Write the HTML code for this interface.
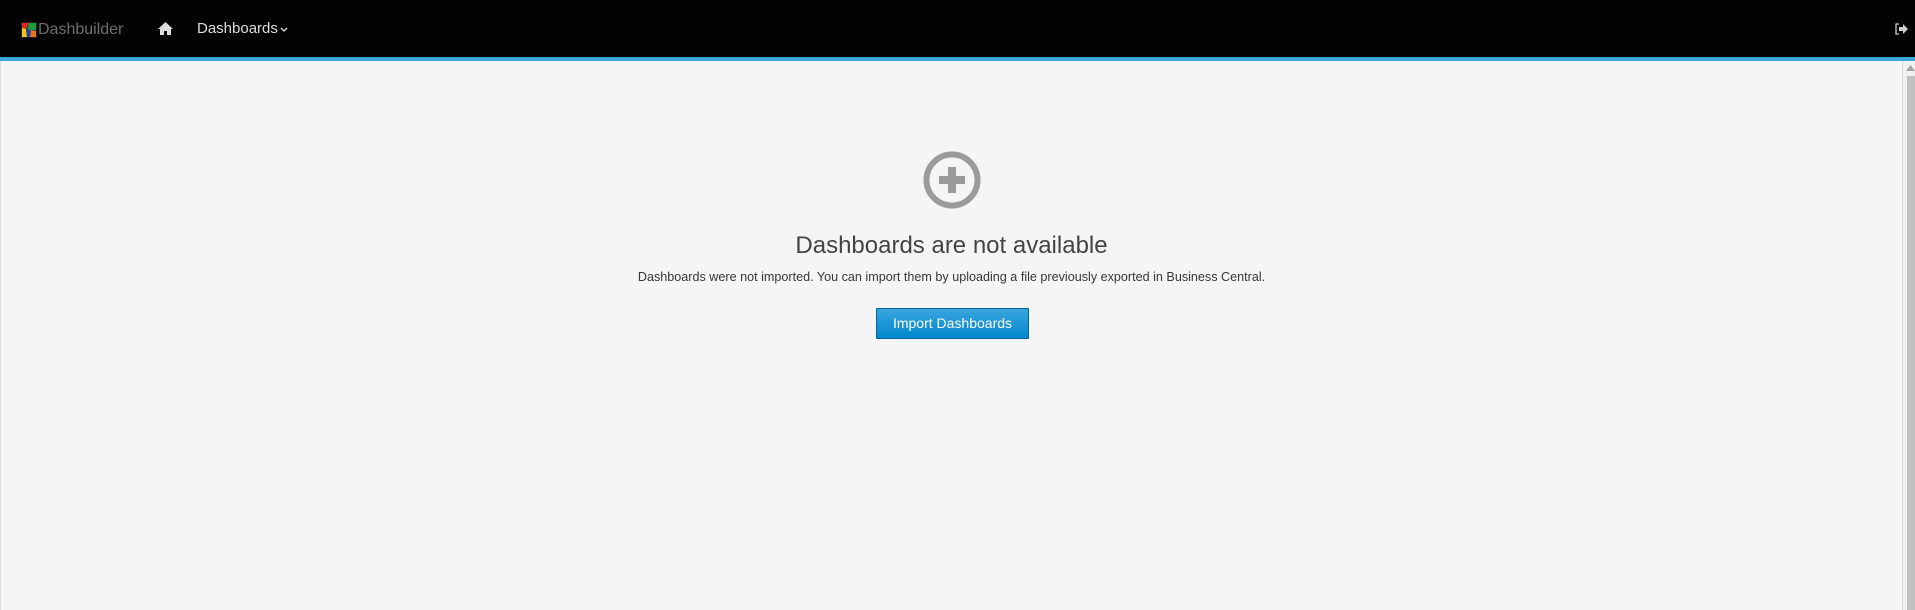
<!DOCTYPE html>
<html><head><meta charset="utf-8"><style>
*{margin:0;padding:0;box-sizing:border-box}
html,body{width:1915px;height:610px;overflow:hidden;background:#f5f5f5;font-family:"Liberation Sans",sans-serif}
.hdr{position:absolute;left:0;top:0;width:1915px;height:57px;background:#030303}
.bl{position:absolute;left:0;top:57px;width:1915px;height:4px;background:#39a5dc}
.main{position:absolute;left:0;top:61px;width:1903px;height:549px;background:#f5f5f5;border-left:1px solid #ddd;border-right:1px solid #ddd}
.sb{position:absolute;left:1903px;top:61px;width:12px;height:549px;background:#f1f1f1}
.thumb{position:absolute;left:1907px;top:76px;width:8px;height:534px;background:#c1c1c1}
.t{position:absolute;white-space:nowrap}
</style></head><body>
<div class="hdr">
 <svg class="t" style="left:21px;top:22px" width="16" height="16" viewBox="0 0 16 16">
  <rect width="16" height="16" fill="#222"/><polygon points="1,1 8,1 5,7 1,6" fill="#e52620"/><polygon points="8,1 15,1 15,8 6,8" fill="#1e9b3a"/><polygon points="1,6 5,7 6,15 1,15" fill="#f3c21b"/><polygon points="5,7 10,8 9,15 6,15" fill="#1c3fa8"/><polygon points="10,8 15,9 15,15 9,15" fill="#e8731a"/>
 </svg>
 <div class="t" style="left:38px;top:21px;font-size:16px;color:#6f6f6f">Dashbuilder</div>
 <svg class="t" style="left:158px;top:22px" width="15" height="13" viewBox="0 0 15 13"><path d="M7.5 0 L15 7 L13 7 L13 13 L9 13 L9 9 L6 9 L6 13 L2 13 L2 7 L0 7 Z" fill="#ddd"/></svg>
 <div class="t" style="left:197px;top:20px;font-size:15px;color:#dedede">Dashboards</div>
 <svg class="t" style="left:280px;top:27px" width="8" height="6" viewBox="0 0 8 6"><path d="M1 1 L4 4 L7 1" stroke="#ddd" stroke-width="1.3" fill="none"/></svg>
 <svg class="t" style="left:1895px;top:23px" width="13" height="12" viewBox="0 0 13 12"><path d="M4 1 H1 V11 H4" stroke="#ccc" stroke-width="1.3" fill="none"/><path d="M4 4 H8 V1 L13 6 L8 11 V8 H4 Z" fill="#ccc"/></svg>
</div>
<div class="bl"></div>
<div class="main"></div>
<div class="sb"></div><div class="thumb"></div>
<svg class="t" style="left:1906px;top:65px" width="9" height="6" viewBox="0 0 9 6"><path d="M0 6 L4.5 0 L9 6Z" fill="#a3a3a3"/></svg>
<svg class="t" style="left:923px;top:151px" width="58" height="58" viewBox="0 0 58 58"><circle cx="29" cy="29" r="25.5" stroke="#9b9b9b" stroke-width="6" fill="none"/><rect x="25" y="16" width="8" height="26" fill="#9b9b9b"/><rect x="16" y="25" width="26" height="8" fill="#9b9b9b"/></svg>
<div class="t" style="left:0;width:1903px;text-align:center;top:232px;font-size:24px;color:#444">Dashboards are not available</div>
<div class="t" style="left:0;width:1903px;text-align:center;top:270px;font-size:12.6px;color:#363636">Dashboards were not imported. You can import them by uploading a file previously exported in Business Central.</div>
<div class="t" style="left:876px;top:308px;width:153px;height:31px;background:linear-gradient(#39a5dc,#0088ce);border:1px solid #00659c;border-radius:1px;color:#fff;font-size:14px;text-align:center;line-height:29px">Import Dashboards</div>
</body></html>
